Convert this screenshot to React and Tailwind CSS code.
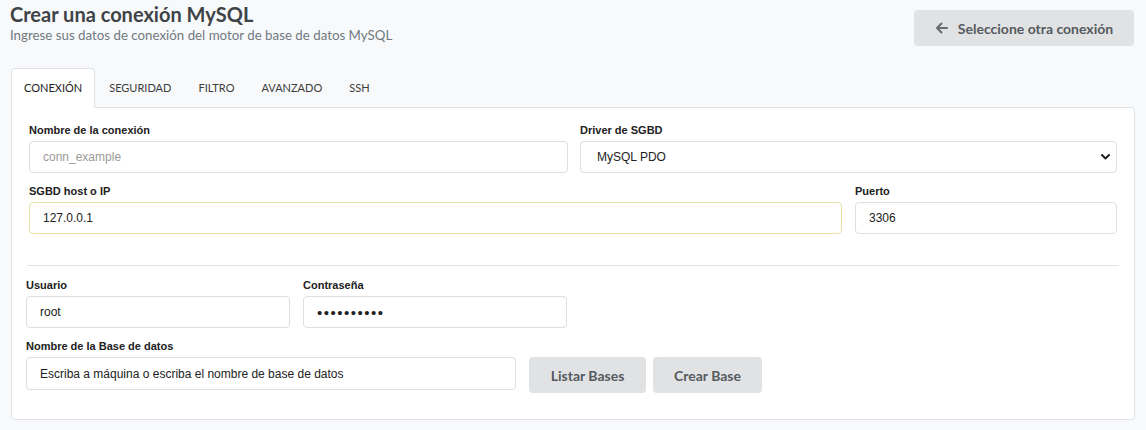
import React from "react";

const TABS = ["Conexión", "Seguridad", "Filtro", "Avanzado", "SSH"];

const lato = "font-['Lato','Noto_Sans',sans-serif]";
const arial = "font-['Liberation_Sans',Arial,sans-serif]";

const inputCls =
  "block w-full h-[32px] rounded-[4px] border border-[#dedede] bg-white px-[13px] text-[12px] text-[#222] outline-none placeholder:text-[#9a9a9a] " +
  arial;

function Label({ children }) {
  return (
    <label className={`block text-[11px] font-bold leading-[13px] text-[#212121] mb-[4px] ${arial}`}>
      {children}
    </label>
  );
}

function Field({ label, className = "", children }) {
  return (
    <div className={className}>
      <Label>{label}</Label>
      {children}
    </div>
  );
}

function GrayButton({ children, className = "" }) {
  return (
    <button
      className={`h-[36px] rounded-[4px] bg-[#e1e2e4] text-[14px] font-bold text-[#555a5e] ${lato} ${className}`}
    >
      {children}
    </button>
  );
}

export default function App() {
  return (
    <div className="min-h-screen bg-[#f8f9fa] px-[11px]">
      {/* Header */}
      <div className="flex items-start justify-between h-[46px]">
        <div className={`-ml-px pt-[2px] ${lato}`}>
          <h1 className="text-[20px] font-bold leading-[24px] text-[#3e4347]">Crear una conexión MySQL</h1>
          <p className="text-[13.3px] leading-[18px] text-[#717a82]">
            Ingrese sus datos de conexión del motor de base de datos MySQL
          </p>
        </div>
        <GrayButton className="mt-[10px] mr-px w-[220px] flex items-center justify-center gap-[10px]">
          <svg width="13" height="12" viewBox="0 0 13 12" fill="none" stroke="#666b70" strokeWidth="2" strokeLinecap="round" strokeLinejoin="round">
            <path d="M12 6H2M6.5 1.5L2 6l4.5 4.5" />
          </svg>
          Seleccione otra conexión
        </GrayButton>
      </div>

      {/* Tabs */}
      <div className={`mt-[22px] flex h-[39px] ${lato}`}>
        {TABS.map((t, i) => (
          <div
            key={t}
            className={
              i === 0
                ? "relative z-10 h-[40px] flex items-center pt-px rounded-t-[4px] border border-[#dee2e6] border-b-white bg-white px-[12px] text-[11px] text-[#1c1c1c]"
                : "h-[39px] flex items-center pt-px border border-transparent px-[12px] text-[11px] text-[#3c3c3c] ml-px"
            }
          >
            {t.toUpperCase()}
          </div>
        ))}
      </div>

      {/* Panel */}
      <div className="w-[1124px] rounded-b-[4px] rounded-tr-[4px] border border-[#dee2e6] bg-white pb-[29px]">
        <div className="px-[17px] pt-[16px]">
          <div className="flex gap-[12px]">
            <Field label="Nombre de la conexión" className="w-[539px]">
              <input className={inputCls} placeholder="conn_example" readOnly />
            </Field>
            <Field label="Driver de SGBD" className="flex-1">
              <div className="relative">
                <select className={`${inputCls} appearance-none pl-[16px]`} defaultValue="pdo">
                  <option value="pdo">MySQL PDO</option>
                </select>
                <svg className="pointer-events-none absolute right-[7px] top-[13px]" width="9" height="6" viewBox="0 0 9 6" fill="none" stroke="#222" strokeWidth="2" strokeLinecap="round" strokeLinejoin="round">
                  <path d="M1 1l3.5 3.5L8 1" />
                </svg>
              </div>
            </Field>
          </div>
          <div className="mt-[12px] flex gap-[13px]">
            <Field label="SGBD host o IP" className="w-[813px]">
              <input
                className={`${inputCls} bg-[#fefdea] border-[#e6e2a6]`}
                defaultValue="127.0.0.1"
                readOnly
              />
            </Field>
            <Field label="Puerto" className="flex-1">
              <input className={inputCls} defaultValue="3306" readOnly />
            </Field>
          </div>
        </div>

        <div className="mx-[15px] mt-[31px] border-t border-[#e3e3e3]" />

        <div className="px-[14px] pt-[13px]">
          <div className="flex gap-[13px]">
            <Field label="Usuario" className="w-[264px]">
              <input className={inputCls} defaultValue="root" readOnly />
            </Field>
            <Field label="Contraseña" className="w-[264px]">
              <input
                type="password"
                className={`${inputCls} text-[15px] tracking-[1.5px]`}
                defaultValue="1234567890"
                readOnly
              />
            </Field>
          </div>
          <div className="mt-[12px] flex items-end gap-[13px]">
            <Field label="Nombre de la Base de datos" className="w-[490px]">
              <input
                className={`${inputCls} h-[33px]`}
                defaultValue="Escriba a máquina o escriba el nombre de base de datos"
                readOnly
              />
            </Field>
            <div className="flex gap-[7px] -mb-[3px]">
              <GrayButton className="w-[117px]">Listar Bases</GrayButton>
              <GrayButton className="w-[109px]">Crear Base</GrayButton>
            </div>
          </div>
        </div>
      </div>
    </div>
  );
}
